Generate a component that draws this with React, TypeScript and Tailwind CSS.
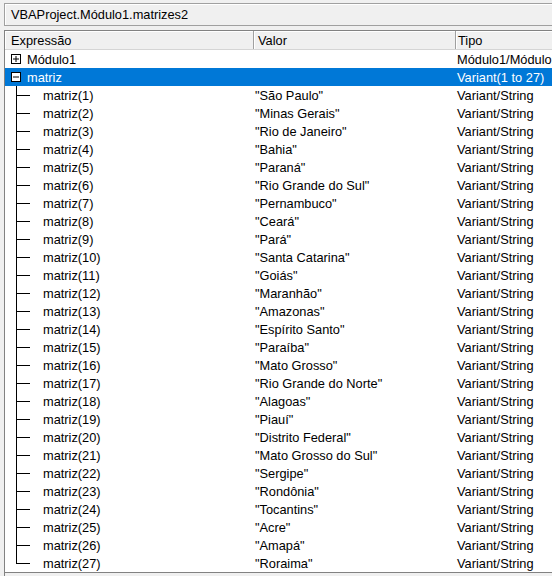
const ITEMS = [
  'São Paulo', 'Minas Gerais', 'Rio de Janeiro', 'Bahia', 'Paraná', 'Rio Grande do Sul',
  'Pernambuco', 'Ceará', 'Pará', 'Santa Catarina', 'Goiás', 'Maranhão', 'Amazonas',
  'Espírito Santo', 'Paraíba', 'Mato Grosso', 'Rio Grande do Norte', 'Alagoas', 'Piauí',
  'Distrito Federal', 'Mato Grosso do Sul', 'Sergipe', 'Rondônia', 'Tocantins', 'Acre',
  'Amapá', 'Roraima',
]

function TreeBox({ open }: { open: boolean }) {
  return (
    <svg width="22" height="18" className="shrink-0">
      <rect x="6.5" y="4.5" width="9" height="9" fill="#fff" stroke="#000" />
      <line x1="8" y1="9" x2="14" y2="9" stroke="#000" />
      {!open && <line x1="11" y1="6" x2="11" y2="12" stroke="#000" />}
    </svg>
  )
}

function Branch({ last }: { last: boolean }) {
  return (
    <svg width="38" height="18" className="shrink-0">
      <line x1="11.5" y1="0" x2="11.5" y2={last ? 9.5 : 18} stroke="#000" />
      <line x1="11" y1="9.5" x2="25" y2="9.5" stroke="#000" />
    </svg>
  )
}

function HeaderCell({ label, className }: { label: string; className: string }) {
  return (
    <div className={`h-full flex items-center pt-[2px] border-r border-[#a0a0a0] shadow-[inset_1px_1px_0_#fff] ${className}`}>
      {label}
    </div>
  )
}

export default function App() {
  return (
    <div className="w-[552px] h-[576px] overflow-hidden bg-[#f0f0f0] text-[12.8px] leading-none text-black font-['Liberation_Sans',Arial,sans-serif]">
      <div className="pt-[3px] pl-[4px]">
        <div className="h-[23px] w-[600px] border border-[#a0a0a0] shadow-[inset_1px_1px_0_#fff] flex items-center pt-[2px] pl-[6px]">
          VBAProject.Módulo1.matrizes2
        </div>
      </div>

      <div className="mt-[4px] ml-[4px] w-[600px] h-[560px] border-l border-t border-[#828282] bg-white">
        <div className="h-[19px] flex bg-[#f0f0f0] border-b border-[#d5d5d5]">
          <HeaderCell label="Expressão" className="w-[249px] pl-[6px]" />
          <HeaderCell label="Valor" className="w-[202px] pl-[4px]" />
          <HeaderCell label="Tipo" className="w-[140px] pl-[2px]" />
        </div>

        <div className="h-[18px] flex items-center">
          <div className="w-[249px] flex items-center">
            <TreeBox open={false} />
            <span className="pt-[2px]">Módulo1</span>
          </div>
          <div className="w-[202px]" />
          <div className="pl-[1px] pt-[2px]">Módulo1/Módulo1</div>
        </div>

        <div className="h-[18px] flex items-center bg-[#0078d7] text-white">
          <div className="w-[249px] flex items-center">
            <TreeBox open={true} />
            <span className="pt-[2px]">matriz</span>
          </div>
          <div className="w-[202px]" />
          <div className="pl-[1px] pt-[2px]">Variant(1 to 27)</div>
        </div>

        {ITEMS.map((name, i) => (
          <div key={name} className="h-[18px] flex items-center">
            <div className="w-[249px] flex items-center">
              <Branch last={i === ITEMS.length - 1} />
              <span className="pt-[2px]">matriz({i + 1})</span>
            </div>
            <div className="w-[202px] pl-[1px] pt-[2px]">"{name}"</div>
            <div className="pl-[1px] pt-[2px]">Variant/String</div>
          </div>
        ))}

        <div className="h-[20px] border-t border-[#828282] bg-[#f0f0f0]" />
      </div>
    </div>
  )
}
